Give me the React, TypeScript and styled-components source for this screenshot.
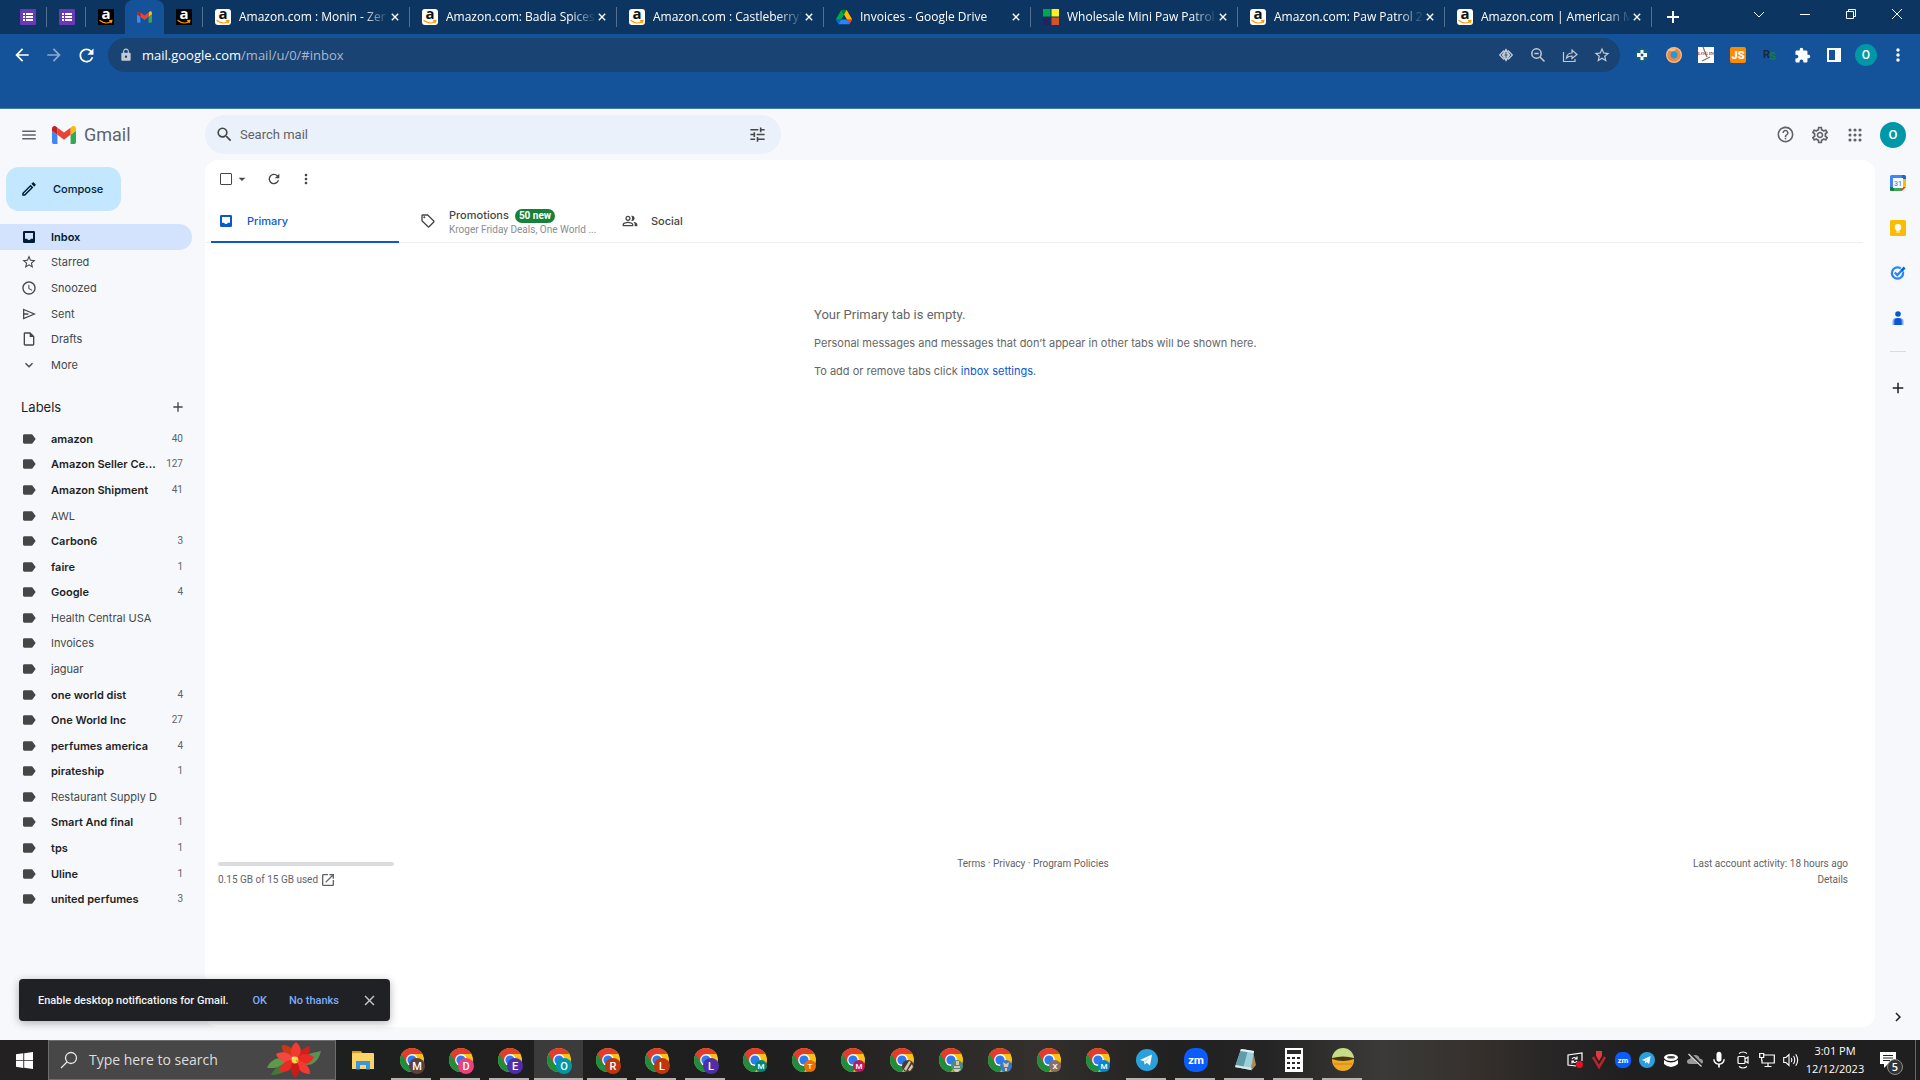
import React from 'react';
import styled, { createGlobalStyle, css } from 'styled-components';
import {
  MdAdd, MdArrowBack, MdArrowForward, MdArrowDropDown, MdClose, MdExpandMore, MdExtension,
  MdHelpOutline, MdLabel, MdLock, MdMenu, MdMic, MdMoreVert, MdOpenInNew, MdOutlineCreate,
  MdOutlineInsertDriveFile, MdOutlinePeopleAlt, MdOutlineSchedule, MdOutlineSell,
  MdOutlineSettings, MdRefresh, MdSearch, MdStarBorder, MdTune, MdChevronRight,
} from 'react-icons/md';

const ui = '"Open Sans", "Noto Sans", sans-serif';
const google = 'Roboto, "Liberation Sans", sans-serif';
const googleText = 'Inter, Roboto, sans-serif';

const GlobalStyle = createGlobalStyle`
  * { box-sizing: border-box; }
  body { margin: 0; font-family: ${google}; }
  button { border: 0; padding: 0; background: none; font: inherit; color: inherit; cursor: pointer; }
  a { color: inherit; text-decoration: none; }
  svg { display: block; flex: none; overflow: visible; }
  ul { list-style: none; margin: 0; padding: 0; }
`;

const Screen = styled.div`
  display: flex;
  flex-direction: column;
  min-height: 100vh;
  background: #f6f8fc;
`;

/* ---------- Browser ---------- */

const TabStrip = styled.div`
  display: flex;
  height: 34px;
  padding-left: 8px;
  background: #0c3661;
  color: #fff;
  font: 12px/16px ${ui};
`;
const PinnedTab = styled.button<{ $active?: boolean; $line?: boolean }>`
  position: relative;
  display: grid;
  place-items: center;
  width: 39px;
  height: 34px;
  ${p => p.$line && css`
    &::after { content: ''; position: absolute; right: 0; top: 7px; height: 20px; border-right: 1px solid #54718f; }
  `}
  ${p => p.$active && css`
    background: #14539a;
    border-radius: 8px 8px 0 0;
  `}
`;
const BrowserTab = styled.div`
  display: flex;
  align-items: center;
  flex: 0 1 207px;
  min-width: 60px;
  height: 20px;
  margin-top: 7px;
  padding: 0 9px 0 12px;
  border-right: 1px solid #54718f;
`;
const TabTitle = styled.span`
  flex: 1;
  min-width: 0;
  margin-left: 8px;
  overflow: hidden;
  white-space: nowrap;
  mask-image: linear-gradient(90deg, #000 124px, transparent 150px);
`;
const TabClose = styled.button`
  display: grid;
  place-items: center;
  width: 10px;
`;
const NewTab = styled.button`
  display: grid;
  place-items: center;
  width: 42px;
`;
const WindowControls = styled.div`
  display: flex;
  margin-left: auto;
  button { display: grid; place-items: center; width: 46px; height: 28px; }
`;

const AddressRow = styled.div`
  flex: none;
  display: flex;
  align-items: flex-start;
  height: 75px;
  padding: 4px 6px;
  background: #14539a;
  border-bottom: 1px solid #4377ae;
  color: #fff;
`;
const ChromeButton = styled.button<{ $dim?: boolean }>`
  display: grid;
  place-items: center;
  width: 32px;
  height: 34px;
  opacity: ${p => (p.$dim ? 0.5 : 1)};
`;
const Omnibox = styled.form`
  flex: 1;
  display: flex;
  align-items: center;
  height: 34px;
  margin: 0 6px;
  padding: 0 2px 0 11px;
  border-radius: 17px;
  background: #194373;
  color: #c3cad3;
`;
const UrlField = styled.div`
  flex: 1;
  margin-left: 9px;
  font: 13px/20px ${ui};
  color: #a9b8ca;
  b { color: #fff; font-weight: 400; }
`;
const Avatar = styled.button<{ $size: number; $font: number }>`
  display: grid;
  place-items: center;
  width: ${p => p.$size}px;
  height: ${p => p.$size}px;
  border-radius: 50%;
  background: #0097a7;
  color: #fff;
  font: 500 ${p => p.$font}px/16px ${google};
`;
const AvatarSlot = styled.div`
  display: grid;
  place-items: center;
  width: 32px;
  height: 34px;
`;

/* ---------- Gmail ---------- */

const Gmail = styled.div`
  position: relative;
  flex: 1;
  display: flex;
  flex-direction: column;
  color: #444746;
`;
const Header = styled.header`
  display: flex;
  align-items: center;
  height: 51px;
  padding-right: 14px;
`;
const Brand = styled.div`
  display: flex;
  align-items: center;
  width: 205px;
  padding-left: 20px;
  color: #5f6368;
`;
const BrandLink = styled.a`
  display: flex;
  align-items: center;
  gap: 8px;
  margin-left: 14px;
  font: 18px/24px ${google};
`;
const SearchBox = styled.form`
  display: flex;
  align-items: center;
  flex: 0 1 576px;
  height: 39px;
  padding: 0 14px 0 10px;
  gap: 6px;
  border-radius: 20px;
  background: #eaf1fb;
  input {
    flex: 1;
    min-width: 0;
    border: 0;
    outline: 0;
    padding: 0;
    background: none;
    font: 13px/20px ${google};
    color: #444746;
  }
  input::placeholder { color: #5f6368; opacity: 1; }
`;
const HeaderActions = styled.div`
  display: flex;
  align-items: center;
  gap: 15px;
  margin-left: auto;
  color: #5f6368;
`;
const Body = styled.div`
  flex: 1;
  display: flex;
  padding-bottom: 13px;
`;
const Sidebar = styled.nav`
  flex: none;
  width: 205px;
  padding-top: 7px;
  font: 11px/16px ${googleText};
`;
const Compose = styled.button`
  display: flex;
  align-items: center;
  gap: 15px;
  height: 44px;
  margin: 0 0 13px 6px;
  padding: 0 18px 0 14px;
  border-radius: 13px;
  background: #c2e7ff;
  color: #001d35;
  font-weight: 500;
`;
const Folders = styled.ul<{ $height: number }>`
  display: grid;
  grid-template-columns: minmax(0, 1fr);
  grid-auto-rows: 1fr;
  height: ${p => p.$height}px;
  width: 192px;
`;
const FolderLink = styled.a<{ $active?: boolean; $bold?: boolean }>`
  display: flex;
  align-items: center;
  height: 100%;
  padding: 0 9px 0 21px;
  border-radius: 0 13px 13px 0;
  ${p => p.$bold && css`font-weight: 600; color: #1f1f1f;`}
  ${p => p.$active && css`background: #d3e3fd; color: #001d35; font-weight: 600;`}
  > span { flex: 1; min-width: 0; margin-left: 14px; white-space: nowrap; }
  small { font: 10px/16px ${google}; color: #5f6368; }
`;
const LabelsHead = styled.div`
  display: flex;
  align-items: center;
  justify-content: space-between;
  width: 192px;
  height: 48px;
  padding: 10px 6px 0 21px;
  h2 { margin: 0; font: 13px/18px ${googleText}; color: #1f1f1f; }
`;
const Panel = styled.main`
  flex: 1;
  min-width: 0;
  border-radius: 13px;
  background: #fff;
`;
const MailTools = styled.div`
  display: flex;
  align-items: center;
  height: 38px;
  padding-left: 15px;
  color: #444746;
  input {
    appearance: none;
    width: 12px;
    height: 12px;
    margin: 0;
    border: 1px solid #444746;
    border-radius: 1px;
  }
  label { display: flex; }
`;
const ToolButton = styled.button<{ $gap: number }>`
  margin-left: ${p => p.$gap}px;
`;
const Categories = styled.div`
  display: flex;
  height: 45px;
  margin-right: 12px;
  padding-left: 6px;
  border-bottom: 1px solid #eceeef;
`;
const Category = styled.button<{ $active?: boolean }>`
  position: relative;
  display: flex;
  align-items: center;
  flex: 0 1 202px;
  padding: 1px 0 0 7px;
  gap: 13px;
  text-align: left;
  font: 500 11px/16px ${googleText};
  color: ${p => (p.$active ? '#0b57d0' : '#444746')};
  ${p => p.$active && css`
    &::after { content: ''; position: absolute; left: 0; bottom: -1px; width: 188px; height: 2px; background: #0b57d0; }
  `}
`;
const CategoryText = styled.span`
  display: flex;
  flex-direction: column;
  padding-top: 2px;
  small { font: 10px/14px ${google}; color: #8a8d91; }
`;
const Badge = styled.span`
  margin-left: 6px;
  padding: 0 4px;
  border-radius: 7px;
  background: #188038;
  color: #fff;
  font: 700 10px/14px ${google};
  display: inline-block;
`;
const EmptyArea = styled.section`
  min-height: 613px;
  padding: 63px 19px 0 0;
`;
const EmptyText = styled.div`
  width: 433px;
  margin: 0 auto;
  white-space: nowrap;
  color: #666;
  font: 11px/16px ${googleText};
  h1 { margin: 0; font: 13px/18px ${google}; }
  p { margin: 12px 0 0; }
  h1 + p { margin-top: 11px; }
  a { color: #0b57d0; }
`;
const Footer = styled.footer`
  display: grid;
  grid-template-columns: 1fr auto 1fr;
  padding: 0 27px 0 13px;
  font: 10px/16px ${google};
  color: #5f6368;
`;
const Storage = styled.div`
  width: 176px;
  padding-top: 6px;
`;
const Meter = styled.div`
  height: 4px;
  border-radius: 2px;
  background: #dadce0;
`;
const StorageText = styled.div`
  display: flex;
  align-items: center;
  gap: 2px;
  margin-top: 6px;
`;
const Activity = styled.div`
  text-align: right;
`;
const SidePanel = styled.aside`
  flex: none;
  display: flex;
  flex-direction: column;
  align-items: center;
  width: 45px;
  color: #1f1f1f;
  hr { width: 16px; margin: 11px 0 13px; border: 0; border-top: 1px solid #dadce0; }
  button { display: grid; place-items: center; width: 45px; height: 45px; }
  button:last-child { height: 20px; margin-top: auto; }
`;
const Toast = styled.div`
  position: absolute;
  left: 19px;
  bottom: 19px;
  display: flex;
  align-items: center;
  width: 371px;
  height: 42px;
  padding: 1px 12px 0 19px;
  border-radius: 4px;
  background: #202124;
  box-shadow: 0 2px 8px rgba(0, 0, 0, 0.3);
  color: #f1f3f4;
  font: 500 11px/16px ${google};
  white-space: nowrap;
  span { flex: 1; }
`;
const ToastAction = styled.button`
  margin-right: 22px;
  color: #7cacf8;
`;

/* ---------- Taskbar ---------- */

const Taskbar = styled.div`
  flex: none;
  display: flex;
  height: 40px;
  background: linear-gradient(90deg, #242122 0%, #1e1f1f 18%, #1e1e1e 40%, #33302d 54%, #212121 61%, #242424 66%, #3b3a38 72%, #35302c 77%, #272525 81%, #201f20 85%, #201f20 100%);
  color: #fff;
  font: 11px/18px ${ui};
`;
const Start = styled.button`
  display: grid;
  place-items: center;
  width: 48px;
`;
const TaskSearch = styled.button`
  display: flex;
  align-items: center;
  width: 288px;
  padding: 0 14px 0 11px;
  gap: 11px;
  border: 1px solid #6d6d6d;
  background: #474747;
  color: #dedede;
  font: 14px/20px ${ui};
  text-align: left;
  white-space: nowrap;
  span { flex: 1; }
`;
const TaskApp = styled.button<{ $active?: boolean; $open?: boolean }>`
  position: relative;
  display: grid;
  place-items: center;
  flex: none;
  width: 49px;
  background: ${p => (p.$active ? '#3b3b3b' : 'none')};
  ${p => p.$open && css`
    &::after {
      content: '';
      position: absolute;
      bottom: 0;
      left: ${p.$active ? 0 : 4}px;
      right: ${p.$active ? 0 : 5}px;
      height: 2px;
      background: #b5b3b1;
    }
  `}
`;
const Apps = styled.div`
  display: flex;
  margin-left: 2px;
`;
const Tray = styled.div`
  display: flex;
  margin-left: auto;
`;
const TrayIcon = styled.button`
  display: grid;
  place-items: center;
  width: 24px;
`;
const Clock = styled.time`
  display: flex;
  flex-direction: column;
  justify-content: center;
  width: 64px;
  padding-bottom: 1px;
  text-align: center;
`;
const Notices = styled.button`
  position: relative;
  display: grid;
  place-items: center;
  width: 42px;
  margin-right: 6px;
  b {
    position: absolute;
    left: 20px;
    top: 19px;
    width: 16px;
    height: 16px;
    border: 1px solid #8c8c8c;
    border-radius: 50%;
    background: #333;
    font: 600 11px/14px ${ui};
  }
`;
const ShowDesktop = styled.button`
  width: 5px;
  border-left: 1px solid #686868;
`;

/* ---------- Drawings ---------- */

const InboxIcon = ({ size = 16 }: { size?: number }) => (
  <svg width={size} height={size} viewBox="0 0 24 24" fill="currentColor" fillRule="evenodd">
    <path d="M5 3h14q2 0 2 2v14q0 2-2 2H5q-2 0-2-2V5q0-2 2-2zM6 6v8.500h3.200a3 3 0 0 0 5.600 0H18V6z" />
  </svg>
);
const SendIcon = ({ size = 16 }: { size?: number }) => (
  <svg width={size} height={size} viewBox="0 0 24 24" fill="none" stroke="currentColor" strokeWidth="1.900">
    <path d="M4 5.300L20 12 4 18.700zM4 12h7" />
  </svg>
);
const AppsIcon = () => (
  <svg width="20" height="20" viewBox="0 0 24 24" fill="currentColor">
    {[6, 12, 18].map(y => [6, 12, 18].map(x => <circle key={`${x}-${y}`} cx={x} cy={y} r="1.900" />))}
  </svg>
);
const FormsIcon = () => (
  <svg width="16" height="16" viewBox="0 0 16 16">
    <rect width="16" height="16" rx="1" fill="#673ab7" />
    <path d="M3 4h2v2H3zM3 7h2v2H3zM3 10h2v2H3zM6 4h7v2H6zM6 7h7v2H6zM6 10h7v2H6z" fill="#fff" />
  </svg>
);
const AmazonIcon = ({ dark }: { dark?: boolean }) => (
  <svg width="16" height="16" viewBox="0 0 16 16">
    <rect width="16" height="16" rx={dark ? 0 : 3} fill={dark ? '#000' : '#fff'} />
    <text x="8" y="10" textAnchor="middle" fontFamily="Open Sans, sans-serif" fontWeight="700" fontSize="15" fill={dark ? '#fff' : '#111'}>a</text>
    <path d="M2 11.500c3.500 3 8 3 11 1M11.500 11.700l2.300-.2-.6 2.100" fill="none" stroke="#ff9900" strokeWidth="1.300" strokeLinecap="round" />
  </svg>
);
const GmailMark = ({ width, height }: { width: number; height: number }) => (
  <svg width={width} height={height} viewBox="52 42 88 66">
    <path fill="#4285f4" d="M58 108h14V74L52 59v43c0 3.320 2.690 6 6 6" />
    <path fill="#34a853" d="M120 108h14c3.320 0 6-2.690 6-6V59l-20 15" />
    <path fill="#fbbc04" d="M120 48v26l20-15v-8c0-7.420-8.470-11.650-14.400-7.200" />
    <path fill="#ea4335" d="M72 74V48l24 18 24-18v26L96 92" />
    <path fill="#c5221f" d="M52 51v8l20 15V48l-5.600-4.200c-5.940-4.450-14.400-.22-14.400 7.200" />
  </svg>
);
const DriveIcon = () => (
  <svg width="16" height="16" viewBox="0 0 87.300 78">
    <path d="m6.600 66.850 3.850 6.650c.8 1.400 1.950 2.500 3.300 3.300l13.750-23.800h-27.500c0 1.550.4 3.100 1.200 4.500z" fill="#0066da" />
    <path d="m43.650 25-13.750-23.800c-1.350.8-2.500 1.900-3.300 3.300l-25.400 44a9.060 9.060 0 0 0 -1.200 4.500h27.500z" fill="#00ac47" />
    <path d="m73.550 76.800c1.350-.8 2.500-1.900 3.300-3.300l1.600-2.750 7.650-13.250c.8-1.400 1.200-2.950 1.200-4.500h-27.502l5.852 11.500z" fill="#ea4335" />
    <path d="m43.650 25 13.750-23.800c-1.350-.8-2.900-1.200-4.500-1.200h-18.500c-1.600 0-3.150.45-4.500 1.200z" fill="#00832d" />
    <path d="m59.800 53h-32.300l-13.750 23.800c1.350.8 2.900 1.200 4.500 1.200h50.800c1.600 0 3.150-.45 4.500-1.200z" fill="#2684fc" />
    <path d="m73.400 26.500-12.700-22c-.8-1.400-1.950-2.500-3.300-3.300l-13.750 23.800 16.150 28h27.450c0-1.550-.4-3.100-1.200-4.500z" fill="#ffba00" />
  </svg>
);
const SquaresIcon = () => (
  <svg width="16" height="16" viewBox="0 0 16 16">
    <path fill="#00a651" d="M0 0h7.500v7.500H0z" />
    <path fill="#fcee21" d="M8.500 0H16v7.500H8.500z" />
    <path fill="#262262" d="M0 8.500h7.500V16H0z" />
    <path fill="#d4532a" d="M8.500 8.500H16V16H8.500z" />
  </svg>
);
const Cross = () => (
  <svg width="8" height="8" viewBox="0 0 10 10"><path d="M1 1l8 8M9 1l-8 8" stroke="currentColor" strokeWidth="1.700" /></svg>
);
const Line = ({ d, size = 16, w = 1 }: { d: string; size?: number; w?: number }) => (
  <svg width={size} height={size} viewBox="0 0 16 16"><path d={d} fill="none" stroke="currentColor" strokeWidth={w} /></svg>
);
const EyeIcon = () => (
  <svg width="16" height="16" viewBox="0 0 16 16" fill="none" stroke="currentColor" strokeWidth="1.300">
    <path d="M6 3.500L1.700 8 6 12.500M10 3.500L14.300 8 10 12.500" />
    <path d="M8 2.500L11.500 8 8 13.500 4.500 8z" fill="currentColor" />
    <path d="M8 5v6M6.500 8h3" stroke="#194373" strokeWidth=".8" />
  </svg>
);
const ZoomOutIcon = () => (
  <svg width="16" height="16" viewBox="0 0 16 16" fill="none" stroke="currentColor" strokeWidth="1.500">
    <circle cx="6.500" cy="6.500" r="4.700" /><path d="M4.300 6.500h4.400M10 10l4.500 4.500" />
  </svg>
);
const ShareIcon = () => (
  <svg width="16" height="16" viewBox="0 0 16 16" fill="none" stroke="currentColor" strokeWidth="1.200">
    <path d="M1.500 5v9.500H13V12" /><path d="M4.500 11c.5-3.500 2.500-5 5.500-5V3l5 4.500-5 4V9c-2.500 0-4 .5-5.500 2z" />
  </svg>
);
const PlusBadgeIcon = () => (
  <svg width="16" height="16" viewBox="0 0 16 16">
    <circle cx="8" cy="8" r="7" fill="#176080" />
    <path d="M6.500 3h3v3h3.500v4H9.500v3h-3v-3H3V6h3.500z" fill="#fff" /><path d="M6.700 6.700h2.600v2.600H6.700z" fill="#176080" />
  </svg>
);
const FoxIcon = () => (
  <svg width="16" height="16" viewBox="0 0 16 16">
    <circle cx="8" cy="8" r="8" fill="#f2c29a" /><circle cx="8" cy="8" r="6.800" fill="#f4873a" />
    <path d="M2.500 4a7 7 0 0 1 8-2.300L8 4z" fill="#ffc27d" /><circle cx="8" cy="8" r="3.400" fill="#1e9be0" />
  </svg>
);
const LoginIcon = () => (
  <svg width="16" height="16" viewBox="0 0 16 16">
    <rect width="16" height="16" fill="#fff" />
    <path d="M5 0l4 10M4 14l8-4" stroke="#777" strokeWidth="1.300" />
    <text x="8" y="8" textAnchor="middle" fontFamily="Liberation Serif, serif" fontWeight="700" fontSize="4.500" fill="#a31515">LOG IN</text>
  </svg>
);
const JsIcon = () => (
  <svg width="16" height="16" viewBox="0 0 16 16">
    <rect width="16" height="16" rx="2" fill="#ff8a00" />
    <text x="8" y="12" textAnchor="middle" fontFamily="Roboto, sans-serif" fontWeight="900" fontSize="11" fill="#fff">JS</text>
  </svg>
);
const RsIcon = () => (
  <svg width="16" height="16" viewBox="0 0 16 16" fontFamily="Roboto, sans-serif" fontWeight="700" fontSize="11">
    <text x="1" y="11" fill="#17293c">R</text><text x="7" y="13" fill="#15803d">S</text>
  </svg>
);
const SidebarIcon = () => (
  <svg width="14" height="14" viewBox="0 0 14 14"><path fill="#fff" fillRule="evenodd" d="M0 0h14v14H0zM2 2v10h6V2z" /></svg>
);
const CalendarIcon = () => (
  <svg width="16" height="16" viewBox="0 0 16 16">
    <path d="M0 1.500Q0 0 1.500 0H12v4H4v12H1.500Q0 16 0 14.500z" fill="#4285f4" />
    <path d="M12 0h2.500Q16 0 16 1.500V4h-4z" fill="#1967d2" /><path d="M12 4h4v8h-4z" fill="#fbbc04" />
    <path d="M4 12h8v4H4z" fill="#34a853" /><path d="M0 12h4v4H1.500Q0 16 0 14.500z" fill="#188038" />
    <path d="M12 12h4l-4 4z" fill="#ea4335" /><path d="M3 3h10v10H3z" fill="#fff" />
    <text x="8" y="10.500" textAnchor="middle" fontFamily="Roboto, sans-serif" fontWeight="500" fontSize="7" fill="#4285f4">31</text>
  </svg>
);
const KeepIcon = () => (
  <svg width="16" height="16" viewBox="0 0 16 16">
    <rect width="16" height="16" rx="1.500" fill="#fbbc04" />
    <circle cx="8" cy="7.200" r="3.200" fill="#fff" /><path d="M6.300 9h3.400v1.800H6.300zM6.300 11.500h3.400v1H6.300z" fill="#fff" />
  </svg>
);
const TasksIcon = () => (
  <svg width="16" height="16" viewBox="0 0 16 16" fill="none">
    <circle cx="7.500" cy="8" r="5.600" stroke="#2684fc" strokeWidth="2.300" />
    <path d="M9 8l5.500-5.500" stroke="#f6f8fc" strokeWidth="4" />
    <path d="M4.800 7.500l2.500 2.500L12 5.300" stroke="#2684fc" strokeWidth="2.300" /><path d="M11.300 6L14.600 2.500" stroke="#0066da" strokeWidth="2.600" />
  </svg>
);
const ContactsIcon = () => (
  <svg width="16" height="16" viewBox="0 0 16 16">
    <circle cx="8" cy="4" r="2.800" fill="#0b57d0" />
    <path d="M2.500 15v-3.500Q2.500 8 6 8h4q3.500 0 3.500 3.500V15z" fill="#7baaf7" /><path d="M4.300 15v-4q0-3 3.700-3t3.700 3v4z" fill="#0b57d0" />
  </svg>
);
const ChromeIcon = ({ letter, color, small, face }: { letter?: string; color: string; small?: boolean; face?: string }) => (
  <svg width="32" height="32" viewBox="-1 0 32 32">
    <circle cx="15" cy="16" r="12" fill="#fbc116" />
    <path d="M4.600 10A12 12 0 0 0 15 28l5.500-9L15 16z" fill="#1e8e3e" />
    <path d="M4.600 10A12 12 0 0 1 25.400 10H15L9.800 19z" fill="#e33b2e" />
    <circle cx="15" cy="16" r="5.900" fill="#fff" /><circle cx="15" cy="16" r="4.600" fill="#2d7bf0" />
    <circle cx={small ? 21 : 20} cy="22" r={small ? 6 : 8} fill={color} />
    {face && <path d={face} fill="#d9c7a8" />}
    {letter && (
      <text x={small ? 21 : 20} y={small ? 25 : 26} textAnchor="middle" fontFamily="Roboto, sans-serif" fontWeight="500" fontSize={small ? 8 : 11} fill="#fff">{letter}</text>
    )}
  </svg>
);
const Poinsettia = () => (
  <svg width="54" height="36" viewBox="0 0 54 36">
    <path d="M0 26C4 16 14 14 24 18 18 26 8 26 0 26z" fill="#5f9a4a" /><path d="M4 33C8 24 16 22 24 20 22 29 14 33 4 33z" fill="#3f7a35" />
    <path d="M54 9C51 22 42 26 32 21 36 12 45 11 54 9z" fill="#5d9150" /><path d="M30 20c8 1 11 5 14 10-7 1-12-3-14-10z" fill="#396f31" />
    <path d="M28 18C18 14 14 8 15 3c9 0 13 6 13 15z" fill="#c83a17" /><path d="M28 18C31 10 37 5 43 4c1 9-5 14-15 14z" fill="#d11f1b" />
    <path d="M28 18C21 11 24 4 29 0c7 6 6 12-1 18z" fill="#f23a31" /><path d="M28 18C22 9 14 9 9 12c3 8 11 10 19 6z" fill="#f5473d" />
    <path d="M28 18C34 10 42 12 47 15c-4 8-12 9-19 3z" fill="#ea2a24" /><path d="M28 18C18 17 13 23 12 30c9 1 15-4 16-12z" fill="#e92b23" />
    <path d="M28 18C38 18 43 25 43 32c-9 0-14-6-15-14z" fill="#f13a31" /><path d="M28 18C21 25 24 31 28 36c6-5 6-12 0-18z" fill="#c91c18" />
    <circle cx="28" cy="18" r="3.400" fill="#f7d64a" /><circle cx="26" cy="16" r="1.300" fill="#ffef9a" /><circle cx="30" cy="19" r="1.300" fill="#d6a91f" />
  </svg>
);
const FolderIcon = () => (
  <svg width="22" height="19" viewBox="0 0 22 19">
    <path d="M0 0h9l2 3h-11z" fill="#d99a18" /><path d="M0 3Q0 2 1 2h20q1 0 1 1v15H0z" fill="#fbd367" />
    <path d="M4 10h14v8.500h-4V14H8v4.500H4z" fill="#3a96dd" />
  </svg>
);
const TelegramIcon = ({ size }: { size: number }) => (
  <svg width={size} height={size} viewBox="0 0 22 22">
    <circle cx="11" cy="11" r="11" fill="#2aa1dd" /><path d="M4 11l12-5.500-2 11-3.500-2.700-2 2-.4-3.500z" fill="#fff" /><path d="M8.100 12.300L14 7.500l-4.500 6" fill="#b8dcef" />
  </svg>
);
const ZoomIcon = ({ size }: { size: number }) => (
  <svg width={size} height={size} viewBox="0 0 24 24">
    <rect width="24" height="24" rx="10" fill="#0b5cff" />
    <text x="12" y="16" textAnchor="middle" fontFamily="Lato, sans-serif" fontWeight="900" fontSize="12" fill="#fff">zm</text>
  </svg>
);
const NotepadIcon = () => (
  <svg width="24" height="24" viewBox="0 0 24 24">
    <path d="M20 3l3 14-5 6z" fill="#a98a58" /><path d="M8 1l13 2-3 19-16-3z" fill="#9fd0d8" /><path d="M8 1l7 1-5 18.500-8-1.500z" fill="#5f9dab" /><path d="M8 1l13 2-.4 2-13.200-2z" fill="#e9f3f4" />
    <path d="M2 19l16 3 1-2-16-3z" fill="#dbe9ea" />
  </svg>
);
const CalculatorIcon = () => (
  <svg width="18" height="24" viewBox="0 0 18 24">
    <path d="M0 0h18v24H0z" fill="#fff" />
    <path d="M2 2h14v4H2zM2 9h3v2H2zM7 9h3v2H7zM12 9h3v2h-3zM2 14h3v2H2zM7 14h3v2H7zM12 14h3v2h-3zM2 19h3v2H2zM7 19h3v2H7zM12 19h3v2h-3z" fill="#2a2a2a" />
  </svg>
);
const MaskIcon = () => (
  <svg width="22" height="22" viewBox="0 0 22 22">
    <circle cx="11" cy="11" r="11" fill="#efaa25" /><path d="M0 10a11 11 0 0 1 22 0z" fill="#c7dc86" />
    <path d="M0 9q11-3 22 0v1q-11 4-22 0z" fill="#4c3512" /><path d="M2 15h18" stroke="#c98412" />
  </svg>
);

/* ---------- Data ---------- */

const browserTabs = [
  { title: 'Amazon.com : Monin - Zer', icon: <AmazonIcon /> },
  { title: 'Amazon.com: Badia Spices', icon: <AmazonIcon /> },
  { title: "Amazon.com : Castleberry'", icon: <AmazonIcon /> },
  { title: 'Invoices - Google Drive', icon: <DriveIcon /> },
  { title: 'Wholesale Mini Paw Patrol', icon: <SquaresIcon /> },
  { title: 'Amazon.com: Paw Patrol 2', icon: <AmazonIcon /> },
  { title: 'Amazon.com | American M', icon: <AmazonIcon /> },
];
const folders = [
  { name: 'Inbox', icon: InboxIcon },
  { name: 'Starred', icon: MdStarBorder },
  { name: 'Snoozed', icon: MdOutlineSchedule },
  { name: 'Sent', icon: SendIcon },
  { name: 'Drafts', icon: MdOutlineInsertDriveFile },
  { name: 'More', icon: MdExpandMore },
];
const labels: [string, number?][] = [
  ['amazon', 40], ['Amazon Seller Ce...', 127], ['Amazon Shipment', 41], ['AWL'], ['Carbon6', 3], ['faire', 1],
  ['Google', 4], ['Health Central USA'], ['Invoices'], ['jaguar'], ['one world dist', 4], ['One World Inc', 27],
  ['perfumes america', 4], ['pirateship', 1], ['Restaurant Supply D'], ['Smart And final', 1], ['tps', 1],
  ['Uline', 1], ['united perfumes', 3],
];
const profiles: { letter?: string; color: string; small?: boolean; open?: boolean; active?: boolean; face?: string }[] = [
  { letter: 'M', color: '#5d4037', open: true },
  { letter: 'D', color: '#ec407a', open: true },
  { letter: 'E', color: '#512da8', open: true },
  { letter: 'O', color: '#0097a7', open: true, active: true },
  { letter: 'R', color: '#bf360c', open: true },
  { letter: 'L', color: '#bf360c', open: true },
  { letter: 'L', color: '#512da8', open: true },
  { letter: 'M', color: '#00897b', small: true },
  { letter: 'T', color: '#ef6c00', small: true },
  { letter: 'M', color: '#c2185b', small: true },
  { color: '#4a3a33', small: true, face: 'M17 25l5-8 2 1-5 9zM21 26l4-6 1 3-3 4z' },
  { color: '#4d8c80', small: true, face: 'M18 22h6v2h-6zM20 17h3v4h-3zM17 25h8l-3 3h-3z' },
  { color: '#3d78c4', small: true, face: 'M18 18l3 2 3-2-1 5h-4zM20 24h2v3h-2z' },
  { letter: 'X', color: '#8d6e63', small: true },
  { letter: 'M', color: '#0288d1', small: true },
];

export default function App() {
  return (
    <Screen>
      <GlobalStyle />
      <TabStrip>
        <PinnedTab $line aria-label="Forms"><FormsIcon /></PinnedTab>
        <PinnedTab $line aria-label="Forms"><FormsIcon /></PinnedTab>
        <PinnedTab aria-label="Amazon"><AmazonIcon dark /></PinnedTab>
        <PinnedTab $active aria-label="Gmail"><GmailMark width={15} height={12} /></PinnedTab>
        <PinnedTab $line aria-label="Amazon"><AmazonIcon dark /></PinnedTab>
        {browserTabs.map(t => (
          <BrowserTab key={t.title}>
            {t.icon}
            <TabTitle>{t.title}</TabTitle>
            <TabClose aria-label="Close tab"><Cross /></TabClose>
          </BrowserTab>
        ))}
        <NewTab aria-label="New tab"><Line d="M8 2v12M2 8h12" w={2} /></NewTab>
        <WindowControls>
          <button aria-label="Search tabs"><Line d="M3 6l5 5 5-5" /></button>
          <button aria-label="Minimize"><Line d="M3 8.500h10" /></button>
          <button aria-label="Restore"><Line d="M3.500 5.500h7v7h-7zM5.500 5v-1.500h7v7H11" /></button>
          <button aria-label="Close"><Line d="M3 3l10 10M13 3L3 13" /></button>
        </WindowControls>
      </TabStrip>
      <AddressRow>
        <ChromeButton aria-label="Back"><MdArrowBack size={20} /></ChromeButton>
        <ChromeButton $dim aria-label="Forward"><MdArrowForward size={20} /></ChromeButton>
        <ChromeButton aria-label="Reload"><MdRefresh size={21} /></ChromeButton>
        <Omnibox>
          <MdLock size={14} />
          <UrlField><b>mail.google.com</b>/mail/u/0/#inbox</UrlField>
          <ChromeButton type="button" aria-label="Preview"><EyeIcon /></ChromeButton>
          <ChromeButton type="button" aria-label="Zoom"><ZoomOutIcon /></ChromeButton>
          <ChromeButton type="button" aria-label="Share"><ShareIcon /></ChromeButton>
          <ChromeButton type="button" aria-label="Bookmark"><MdStarBorder size={18} /></ChromeButton>
        </Omnibox>
        <ChromeButton aria-label="Extension"><PlusBadgeIcon /></ChromeButton>
        <ChromeButton aria-label="Extension"><FoxIcon /></ChromeButton>
        <ChromeButton aria-label="Extension"><LoginIcon /></ChromeButton>
        <ChromeButton aria-label="Extension"><JsIcon /></ChromeButton>
        <ChromeButton aria-label="Extension"><RsIcon /></ChromeButton>
        <ChromeButton aria-label="Extensions"><MdExtension size={17} /></ChromeButton>
        <ChromeButton aria-label="Side panel"><SidebarIcon /></ChromeButton>
        <AvatarSlot><Avatar $size={22} $font={12}>O</Avatar></AvatarSlot>
        <ChromeButton aria-label="Menu"><MdMoreVert size={20} /></ChromeButton>
      </AddressRow>

      <Gmail>
        <Header>
          <Brand>
            <button aria-label="Main menu"><MdMenu size={18} /></button>
            <BrandLink href="#inbox"><GmailMark width={24} height={18} />Gmail</BrandLink>
          </Brand>
          <SearchBox role="search">
            <MdSearch size={19} />
            <input aria-label="Search mail" placeholder="Search mail" />
            <button type="button" aria-label="Search options"><MdTune size={19} /></button>
          </SearchBox>
          <HeaderActions>
            <button aria-label="Support"><MdHelpOutline size={19} /></button>
            <button aria-label="Settings"><MdOutlineSettings size={20} /></button>
            <button aria-label="Google apps"><AppsIcon /></button>
            <Avatar $size={26} $font={13}>O</Avatar>
          </HeaderActions>
        </Header>
        <Body>
          <Sidebar>
            <Compose><MdOutlineCreate size={18} />Compose</Compose>
            <Folders $height={154}>
              {folders.map((f, i) => (
                <li key={f.name}>
                  <FolderLink href="#inbox" $active={i === 0}><f.icon size={16} /><span>{f.name}</span></FolderLink>
                </li>
              ))}
            </Folders>
            <LabelsHead><h2>Labels</h2><button aria-label="Create label"><MdAdd size={16} /></button></LabelsHead>
            <Folders $height={486}>
              {labels.map(([name, count]) => (
                <li key={name}>
                  <FolderLink href="#label" $bold={count !== undefined}>
                    <MdLabel size={16} color="#444746" /><span>{name}</span>{count !== undefined && <small>{count}</small>}
                  </FolderLink>
                </li>
              ))}
            </Folders>
          </Sidebar>
          <Panel>
            <MailTools>
              <label><input type="checkbox" aria-label="Select" /></label>
              <ToolButton $gap={2} aria-label="Select options"><MdArrowDropDown size={16} /></ToolButton>
              <ToolButton $gap={16} aria-label="Refresh"><MdRefresh size={16} /></ToolButton>
              <ToolButton $gap={16} aria-label="More"><MdMoreVert size={16} /></ToolButton>
            </MailTools>
            <Categories>
              <Category $active><InboxIcon />Primary</Category>
              <Category>
                <MdOutlineSell size={16} />
                <CategoryText>
                  <span>Promotions<Badge>50 new</Badge></span>
                  <small>Kroger Friday Deals, One World ...</small>
                </CategoryText>
              </Category>
              <Category><MdOutlinePeopleAlt size={16} />Social</Category>
            </Categories>
            <EmptyArea>
              <EmptyText>
                <h1>Your Primary tab is empty.</h1>
                <p>Personal messages and messages that don’t appear in other tabs will be shown here.</p>
                <p>To add or remove tabs click <a href="#settings">inbox settings</a>.</p>
              </EmptyText>
            </EmptyArea>
            <Footer>
              <Storage>
                <Meter />
                <StorageText>0.15 GB of 15 GB used <MdOpenInNew size={16} /></StorageText>
              </Storage>
              <div><a href="#terms">Terms</a> · <a href="#privacy">Privacy</a> · <a href="#policies">Program Policies</a></div>
              <Activity>Last account activity: 18 hours ago<br /><a href="#details">Details</a></Activity>
            </Footer>
          </Panel>
          <SidePanel>
            <button aria-label="Calendar"><CalendarIcon /></button>
            <button aria-label="Keep"><KeepIcon /></button>
            <button aria-label="Tasks"><TasksIcon /></button>
            <button aria-label="Contacts"><ContactsIcon /></button>
            <hr />
            <button aria-label="Get add-ons"><MdAdd size={18} /></button>
            <button aria-label="Hide side panel"><MdChevronRight size={18} /></button>
          </SidePanel>
        </Body>
        <Toast role="alert">
          <span>Enable desktop notifications for Gmail.</span>
          <ToastAction>OK</ToastAction>
          <ToastAction>No thanks</ToastAction>
          <button aria-label="Dismiss"><MdClose size={17} color="#c4c7c5" /></button>
        </Toast>
      </Gmail>

      <Taskbar>
        <Start aria-label="Start">
          <svg width="17" height="17" viewBox="0 0 17 17"><path fill="#fff" d="M0 2.300L7.300 1.300v6.900H0zM8.200 1.200L17 0v8.200H8.200zM0 9h7.300v6.900L0 14.800zM8.200 9H17v8l-8.800-1.200z" /></svg>
        </Start>
        <TaskSearch>
          <svg width="18" height="18" viewBox="0 0 18 18" fill="none" stroke="#e6e6e6" strokeWidth="1.300"><circle cx="11" cy="7" r="5.500" /><path d="M7 11l-6 6" /></svg>
          <span>Type here to search</span>
          <Poinsettia />
        </TaskSearch>
        <Apps>
          <TaskApp aria-label="File Explorer"><FolderIcon /></TaskApp>
          {profiles.map((p, i) => (
            <TaskApp key={i} $open={p.open} $active={p.active} aria-label="Chrome"><ChromeIcon {...p} /></TaskApp>
          ))}
          <TaskApp $open aria-label="Telegram"><TelegramIcon size={22} /></TaskApp>
          <TaskApp $open aria-label="Zoom"><ZoomIcon size={24} /></TaskApp>
          <TaskApp $open aria-label="Notepad"><NotepadIcon /></TaskApp>
          <TaskApp $open aria-label="Calculator"><CalculatorIcon /></TaskApp>
          <TaskApp $open aria-label="App"><MaskIcon /></TaskApp>
        </Apps>
        <Tray>
          <TrayIcon aria-label="Update">
            <svg width="16" height="18" viewBox="0 0 16 18" fill="none" stroke="#fff" strokeWidth="1.200"><path d="M9 15L1 14V4l14-2v8" /><path d="M5 8q2-3 5 0M10 5.500V8H7.500M10 10q-2 3-5 0M5 12.500V10h2" /><circle cx="12.500" cy="13.500" r="3.500" fill="#e81123" stroke="none" /></svg>
          </TrayIcon>
          <TrayIcon aria-label="Antivirus">
            <svg width="14" height="18" viewBox="0 0 14 18"><path d="M4 0h6v5l-3 5-3-5z" fill="#e0393e" /><path d="M1 6l6 10 6-10" fill="none" stroke="#b8242b" strokeWidth="2.500" /></svg>
          </TrayIcon>
          <TrayIcon aria-label="Zoom"><ZoomIcon size={16} /></TrayIcon>
          <TrayIcon aria-label="Telegram"><TelegramIcon size={16} /></TrayIcon>
          <TrayIcon aria-label="Drive">
            <svg width="16" height="16" viewBox="0 0 16 16" fill="#fff"><ellipse cx="8" cy="5.500" rx="7" ry="3.500" /><path d="M1 8q7 5 14 0v4q-7 6-14 0z" /><ellipse cx="8" cy="5.300" rx="4" ry="1.200" fill="#444" /></svg>
          </TrayIcon>
          <TrayIcon aria-label="Cloud">
            <svg width="16" height="16" viewBox="0 0 16 16"><path d="M3 12Q0 12 0 9.500T3 7q1-4 5-4t4.500 3.500Q16 7 16 9.500T13 12z" fill="#9a9a9a" /><path d="M2 1l13 13" stroke="#222" strokeWidth="3" /><path d="M1.500 2l13 12.500" stroke="#ddd" strokeWidth="1.200" /></svg>
          </TrayIcon>
          <TrayIcon aria-label="Microphone"><MdMic size={20} /></TrayIcon>
          <TrayIcon aria-label="Camera">
            <svg width="16" height="18" viewBox="0 0 16 18" fill="none" stroke="#fff" strokeWidth="1.200"><rect x="3" y="5.500" width="7" height="7" rx="1" /><path d="M10 8l3-2v6l-3-2M4 2.500q4-3 8 0M4 15.500q4 3 8 0" /></svg>
          </TrayIcon>
          <TrayIcon aria-label="Network">
            <svg width="16" height="16" viewBox="0 0 16 16" fill="none" stroke="#fff" strokeWidth="1.200"><path d="M5 3h10.300v8H3V8M9 11v3.500M5.500 14.500h7M.7 1.500h4v4h-4zM2.700 5.500V9" /></svg>
          </TrayIcon>
          <TrayIcon aria-label="Volume">
            <svg width="16" height="16" viewBox="0 0 16 16" fill="none" stroke="#fff" strokeWidth="1.100"><path d="M.7 5.500H3l3-3v11l-3-3H.7zM8.300 6q1.200 2 0 4M10.500 4q2.500 4 0 8M12.700 2.200q4 5.800 0 11.600" /></svg>
          </TrayIcon>
          <Clock><span>3:01 PM</span><span>12/12/2023</span></Clock>
          <Notices aria-label="Notifications">
            <svg width="16" height="16" viewBox="0 0 16 16"><path d="M0 0h16v12H8l-4 4v-4H0z" fill="#fff" /><path d="M3 3.500h10M3 6h10M3 8.500h7" stroke="#222" strokeWidth="1.100" /></svg>
            <b>5</b>
          </Notices>
          <ShowDesktop aria-label="Show desktop" />
        </Tray>
      </Taskbar>
    </Screen>
  );
}
